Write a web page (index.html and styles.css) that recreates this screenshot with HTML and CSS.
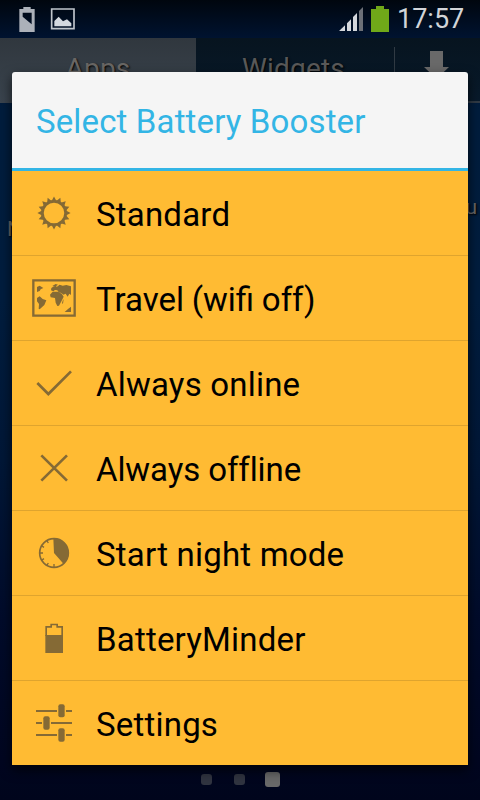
FILE: index.html
```html
<!DOCTYPE html>
<html lang="en">
<head>
<meta charset="utf-8">
<title>Select Battery Booster</title>
<link rel="stylesheet" href="styles.css">
</head>
<body>
<div class="screen">
  <header class="status">
    <svg class="status-left" width="60" height="36" viewBox="0 0 180 108">
      <path fill="#acb1b9" fill-rule="evenodd" d="M13 27H25V21H47V27H59V96H13ZM23 38V50L50 73V38Z"/>
      <path fill="none" stroke="#bfc5cc" stroke-width="5" d="M110 27H177V86H110Z"/>
      <path fill="#d3d8df" d="M118 79V63L131 50L144 64L156 58L169 70V79Z"/>
    </svg>
    <svg class="status-right" width="54" height="36" viewBox="0 0 162 108">
      <path fill="#d4d7dc" d="M9 93L27 76V93ZM33 70L45 58V93H33ZM51 51L63 39V93H51Z"/>
      <path fill="#6c7077" d="M69 33L81 21V93H69Z"/>
      <path fill="#70a819" d="M105 27H120V18H144V27H159V96H105Z"/>
    </svg>
    <span class="clock">17:57</span>
  </header>
  <nav class="tabs">
    <div class="tab tab-active">Apps</div>
    <div class="tab">Widgets</div>
    <div class="tab-download">
      <svg width="25" height="28" viewBox="0 0 25 28"><path fill="#696969" d="M6 0H19V16H25L12.500 28L0 16H6Z"/></svg>
    </div>
  </nav>
  <main class="home"><span class="label-left">N</span><span class="label-right">u</span></main>
  <footer class="pages"><i class="dot"></i><i class="dot"></i><i class="dot current"></i></footer>

  <section class="dialog">
    <h1 class="title">Select Battery Booster</h1>
    <ul class="menu">
      <li class="item">
        <svg class="icon" viewBox="0 0 48 48">
          <defs><path id="ray" d="M21 13L24 7.400L27 13ZM21 35L24 40.600L27 35Z"/></defs>
          <circle class="line" cx="24" cy="24" r="11.600" stroke-width="2.700"/>
          <use href="#ray"/><use href="#ray" transform="rotate(22.500 24 24)"/><use href="#ray" transform="rotate(45 24 24)"/><use href="#ray" transform="rotate(67.500 24 24)"/><use href="#ray" transform="rotate(90 24 24)"/><use href="#ray" transform="rotate(112.500 24 24)"/><use href="#ray" transform="rotate(135 24 24)"/><use href="#ray" transform="rotate(157.500 24 24)"/>
        </svg><span>Standard</span>
      </li>
      <li class="item">
        <svg class="icon" viewBox="90 312 144 144">
          <path class="line" stroke-width="7" d="M100 331H224V437H100Z"/>
          <path d="M111 351L119 347L130 354L122 358L119 363L111 366ZM111 384L119 379L128 387L139 391L133 405L124 413L119 418L116 416L117 402L111 394ZM150 374L158 365L173 365L185 371L191 380L185 392L177 407L172 408L167 398L165 384L152 382ZM153 361L154 354L164 347L171 350L179 344L188 347L199 345L213 349V375L208 371L203 380L197 371L190 374L184 369L176 367L172 361L165 360L160 364ZM157 348L167 342L174 344L165 350ZM213 410V426H194L204 417ZM188 392L191 387L189 401L186 400Z"/>
        </svg><span class="ligated">Travel (wifi off)</span>
      </li>
      <li class="item">
        <svg class="icon" viewBox="90 57 144 144"><path class="line" stroke-width="8" d="M112 129L145 162L213 94"/></svg><span>Always online</span>
      </li>
      <li class="item">
        <svg class="icon" viewBox="90 312 144 144"><path class="line" stroke-width="8" d="M124 346L201 422M201 346L124 422"/></svg><span class="tight">Always offline</span>
      </li>
      <li class="item">
        <svg class="icon" viewBox="90 57 144 144">
          <circle class="line" cx="162" cy="129" r="43" stroke-width="5"/>
          <path d="M162 129L160 85A44 44 0 0 1 191 162Z"/>
          <path class="line" stroke-width="4" d="M118 129H129M162 162V173M140 91L145 99M124 107L132 112M124 151L132 146M140 167L145 159"/>
        </svg><span>Start night mode</span>
      </li>
      <li class="item">
        <svg class="icon" viewBox="90 312 144 144">
          <path class="line" stroke-width="5" d="M138.500 378V350.500H153.500V343.500H171.500V350.500H186.500V378"/>
          <path d="M136 375H189V429H136Z"/>
        </svg><span>BatteryMinder</span>
      </li>
      <li class="item">
        <svg class="icon" viewBox="90 177 144 144">
          <path class="line" stroke-width="6" d="M108 213H171M198 213H216M108 249H126M153 249H216M108 285H171M198 285H216"/>
          <rect x="175" y="193" width="19" height="39" rx="6"/><rect x="130" y="229" width="19" height="40" rx="6"/><rect x="175" y="265" width="19" height="40" rx="6"/>
        </svg><span>Settings</span>
      </li>
    </ul>
  </section>
</div>
</body>
</html>
```
FILE: styles.css
```css
* { box-sizing: border-box; }
body { margin: 0; font-family: Roboto, "Liberation Sans", sans-serif; }
.screen {
  position: relative;
  display: flex;
  flex-direction: column;
  width: 480px;
  height: 800px;
  overflow: hidden;
  background: linear-gradient(#00060e 0, #001330 38px, #001d3d 110px, #001d3e 300px, #001737 460px, #000b2a 620px, #000620 760px, #00051c 800px);
}
.status { display: flex; height: 38px; padding-left: 15px; }
.status-right { margin-left: 261px; }
.clock { margin-left: 7px; font-size: 27px; line-height: 38px; color: #d2d4d8; white-space: nowrap; }
.tabs {
  display: flex;
  height: 65px;
  background: linear-gradient(#07141f, #081a2b);
  border-bottom: 2px solid #303a45;
}
.tab {
  width: 198px;
  padding: 12px 3px 0 0;
  text-align: center;
  font-size: 28px;
  letter-spacing: .2px;
  line-height: 37px;
  color: #595959;
  text-shadow: 1px 1px 2px #000;
}
.tab-active { width: 196px; height: 65px; padding-right: 0; background: linear-gradient(#30373e, #3a444e); color: #696664; }
.tab-download { flex: 1; height: 50px; margin-top: 9px; padding: 4px 0 0 29px; border-left: 1px solid #303a43; }
.home {
  display: flex;
  flex: 1;
  justify-content: space-between;
  padding: 92px 3px 0 7px;
  font-size: 21px;
  line-height: 24px;
  color: #666;
  text-shadow: 1px 1px 2px #000;
}
.label-left { padding-top: 22px; }
.pages { display: flex; align-items: center; gap: 22px; height: 42px; padding-left: 201px; }
.dot { width: 11px; height: 11px; border-radius: 3px; background: #303440; }
.current { width: 15px; height: 15px; margin-left: -2px; background: #696969; }
.dialog {
  position: absolute;
  top: 72px;
  left: 12px;
  width: 456px;
  border-radius: 3px 3px 0 0;
  overflow: hidden;
  box-shadow: 0 5px 12px rgba(0, 0, 0, .7);
}
.title {
  height: 99px;
  margin: 0;
  padding-left: 24px;
  border-bottom: 3px solid #33b5e5;
  background: #f5f5f5;
  color: #33b5e5;
  font-size: 33px;
  font-weight: 400;
  letter-spacing: .14px;
  line-height: 99px;
  white-space: nowrap;
}
.menu { margin: 0; padding: 0; list-style: none; background: #ffbb33; }
.item {
  display: flex;
  align-items: center;
  height: 85px;
  padding-left: 18px;
  border-bottom: 1px solid #dfa42e;
  color: #000;
  font-size: 33px;
  letter-spacing: .2px;
  line-height: 40px;
  white-space: nowrap;
}
.item span { padding: 3px 0 0 18px; }
.item .ligated { letter-spacing: normal; word-spacing: -.5px; }
.item .tight { letter-spacing: -.1px; }
.item:last-child { height: 84px; border-bottom: 0; }
.icon { flex: none; width: 48px; height: 48px; fill: #856a35; }
.line { fill: none; stroke: #856a35; }
```
